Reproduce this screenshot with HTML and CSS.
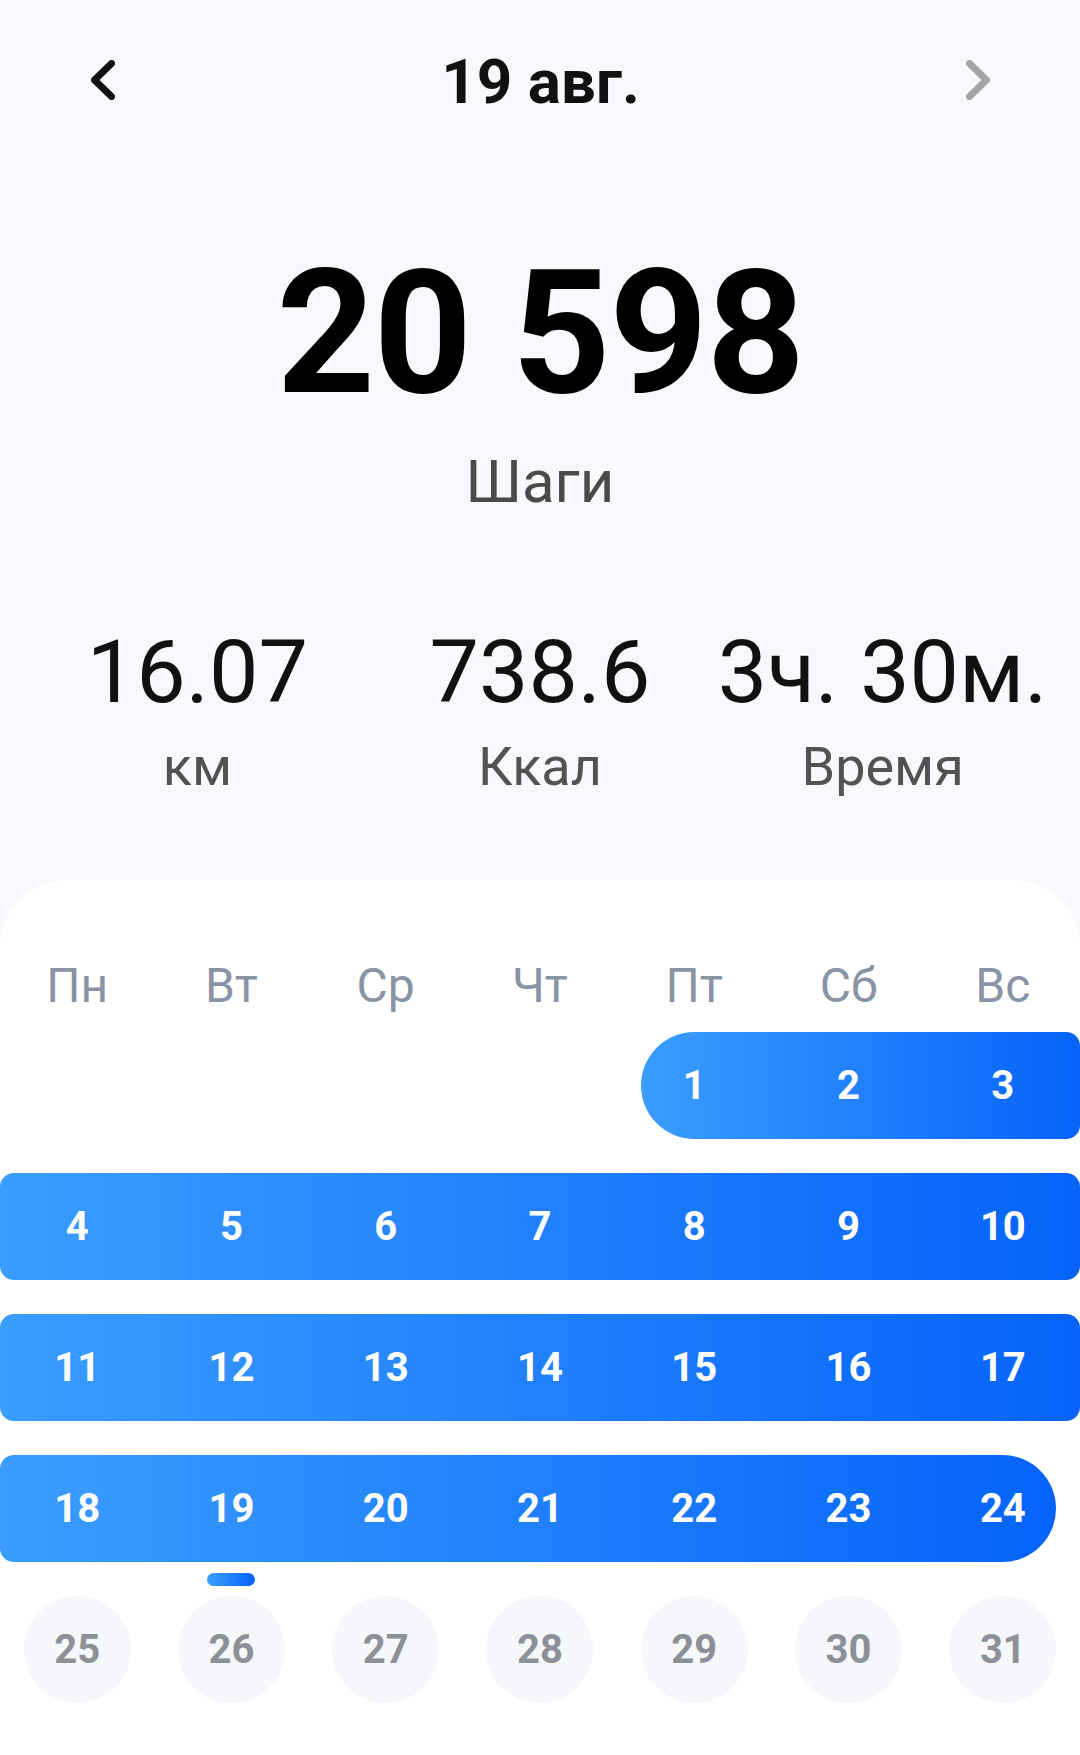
FILE: index.html
```html
<!DOCTYPE html>
<html lang="ru">

<head>
  <meta charset="UTF-8" />
  <meta name="viewport" content="width=device-width, initial-scale=1" />
  <title>Шаги - 19 авг.</title>
  <link rel="stylesheet" href="styles.css">
</head>

<body>
  <header class="header">
    <svg class="chevron" width="24" height="40" viewBox="0 0 24 40">
      <path d="M20.5 3.5 L3.5 20 L20.5 36.5" />
    </svg>
    <h1 class="title">19 авг.</h1>
    <svg class="chevron disabled" width="24" height="40" viewBox="0 0 24 40">
      <path d="M3.5 3.5 L20.5 20 L3.5 36.5" />
    </svg>
  </header>

  <section class="summary">
    <div class="steps-value">20 598</div>
    <div class="steps-label">Шаги</div>

    <div class="stats">
      <div class="stat">
        <div class="stat-value">16.07</div>
        <div class="stat-label">км</div>
      </div>
      <div class="stat">
        <div class="stat-value">738.6</div>
        <div class="stat-label">Ккал</div>
      </div>
      <div class="stat">
        <div class="stat-value">3ч. 30м.</div>
        <div class="stat-label">Время</div>
      </div>
    </div>
  </section>

  <section class="calendar">
    <div class="weekdays">
      <span>Пн</span><span>Вт</span><span>Ср</span><span>Чт</span><span>Пт</span><span>Сб</span><span>Вс</span>
    </div>

    <div class="weeks">
      <div class="week">
        <span class="cell"></span><span class="cell"></span><span class="cell"></span><span class="cell"></span>
        <div class="band band-start">
          <span class="cell">1</span><span class="cell">2</span><span class="cell">3</span>
        </div>
      </div>

      <div class="week">
        <div class="band">
          <span class="cell">4</span><span class="cell">5</span><span class="cell">6</span><span class="cell">7</span>
          <span class="cell">8</span><span class="cell">9</span><span class="cell">10</span>
        </div>
      </div>

      <div class="week">
        <div class="band">
          <span class="cell">11</span><span class="cell">12</span><span class="cell">13</span><span class="cell">14</span>
          <span class="cell">15</span><span class="cell">16</span><span class="cell">17</span>
        </div>
      </div>

      <div class="week">
        <div class="band band-end">
          <span class="cell">18</span><span class="cell today">19</span><span class="cell">20</span><span class="cell">21</span>
          <span class="cell">22</span><span class="cell">23</span><span class="cell">24</span>
        </div>
      </div>

      <div class="week future">
        <span class="cell"><span class="dot">25</span></span>
        <span class="cell"><span class="dot">26</span></span>
        <span class="cell"><span class="dot">27</span></span>
        <span class="cell"><span class="dot">28</span></span>
        <span class="cell"><span class="dot">29</span></span>
        <span class="cell"><span class="dot">30</span></span>
        <span class="cell"><span class="dot">31</span></span>
      </div>
    </div>
  </section>
</body>

</html>
```

FILE: styles.css
```css
* {
  margin: 0;
  padding: 0;
  box-sizing: border-box;
  font-family: Roboto, 'Noto Sans', sans-serif;
}

:root {
  --cell: 154.2857px;
  --inset: 23.64px;
  --blue: linear-gradient(90deg, #3b9dfe 0%, #0563fa 100%);
}

html,
body {
  overflow: hidden;
}

body {
  width: 1080px;
  min-height: 100vh;
  background-color: #f7f8fb;
  color: #111;
  display: flex;
  flex-direction: column;
}

/* top bar */
.header {
  height: 160px;
  padding: 0 90px 0 91px;
  display: flex;
  justify-content: space-between;
  align-items: center;
}

.chevron path {
  fill: none;
  stroke: #111;
  stroke-width: 7;
  stroke-linecap: round;
  stroke-linejoin: round;
}

.chevron.disabled path {
  stroke: #a3a4a8;
}

.title {
  font-size: 62px;
  font-weight: 700;
  line-height: 1;
  padding-top: 4px;
  color: #111;
}

/* day summary */
.summary {
  display: flex;
  flex-direction: column;
  align-items: center;
  text-align: center;
}

.steps-value {
  margin-top: 87px;
  font-size: 172px;
  font-weight: 700;
  line-height: 1;
  letter-spacing: -1.5px;
  color: #000;
}

.steps-label {
  margin-top: 33px;
  font-size: 60px;
  line-height: 1;
  color: #4a4a4a;
}

.stats {
  margin-top: 116px;
  width: 100%;
  padding: 0 26px;
  display: grid;
  grid-template-columns: repeat(3, 1fr);
}

.stat-value {
  font-size: 88px;
  line-height: 1;
  color: #111;
  white-space: nowrap;
}

.stat-label {
  margin-top: 24px;
  font-size: 54px;
  line-height: 1;
  color: #525252;
}

/* month calendar */
.calendar {
  flex: 1;
  margin-top: 86px;
  padding-top: 82px;
  background-color: #fff;
  border-radius: 68px 68px 0 0;
}

.weekdays {
  display: flex;
}

.weekdays span {
  flex: 0 0 var(--cell);
  text-align: center;
  font-size: 48px;
  line-height: 1;
  color: #8894a4;
}

.weeks {
  margin-top: 22px;
  display: flex;
  flex-direction: column;
  gap: 34px;
}

.week {
  height: 107px;
  display: flex;
}

.cell {
  flex: 0 0 var(--cell);
  width: var(--cell);
  display: flex;
  align-items: center;
  justify-content: center;
  font-size: 40px;
  font-weight: 700;
  color: #fff;
  position: relative;
}

.band {
  display: flex;
  background: var(--blue);
  border-radius: 14px;
}

.band-start {
  margin-left: var(--inset);
  border-radius: 54px 14px 14px 54px;
}

.band-start .cell:first-child {
  margin-left: calc(-1 * var(--inset));
}

.band-end {
  margin-right: var(--inset);
  border-radius: 14px 54px 54px 14px;
}

.band-end .cell:last-child {
  margin-right: calc(-1 * var(--inset));
}

.today::after {
  content: '';
  position: absolute;
  top: calc(100% + 11px);
  left: 50%;
  width: 48px;
  height: 13px;
  margin-left: -24px;
  border-radius: 7px;
  background: var(--blue);
}

.dot {
  width: 107px;
  height: 107px;
  border-radius: 50%;
  background-color: #f6f7fb;
  color: #8d9097;
  display: flex;
  align-items: center;
  justify-content: center;
}
```
